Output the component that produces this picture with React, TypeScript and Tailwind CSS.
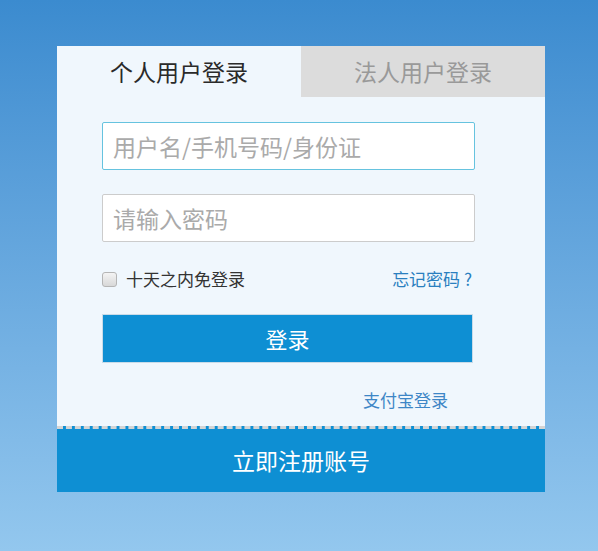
import { useState } from "react";

const FONT = { fontFamily: '"Microsoft YaHei", "Noto Sans CJK SC", "Noto Sans", sans-serif' };

export default function App() {
  const [tab, setTab] = useState<"person" | "corp">("person");
  const [remember, setRemember] = useState(false);

  return (
    <div
      className="h-[551px] w-[598px] bg-gradient-to-b from-[#3b8bcf] to-[#93c7ee] pt-[46px] pl-[57px]"
      style={FONT}
    >
      <div className="w-[488px] bg-[#f0f7fd]">
        <div className="flex h-[51px]">
          <button
            className={`flex-1 text-[23px] ${tab === "person" ? "bg-[#f0f7fd] text-[#2a2a2a]" : "bg-[#dcdcdc] text-[#999]"}`}
            onClick={() => setTab("person")}
          >
            个人用户登录
          </button>
          <button
            className={`flex-1 text-[23px] ${tab === "corp" ? "bg-[#f0f7fd] text-[#2a2a2a]" : "bg-[#dcdcdc] text-[#999]"}`}
            onClick={() => setTab("corp")}
          >
            法人用户登录
          </button>
        </div>

        <div className="px-[45px] pt-[25px] pb-[13px]">
          <input
            className="block h-[48px] w-[373px] rounded-[2px] border border-[#66c3df] bg-white px-[10px] text-[23px] text-[#333] outline-none placeholder:text-[#aaa]"
            placeholder="用户名/手机号码/身份证"
          />
          <input
            type="password"
            className="mt-[24px] block h-[48px] w-[373px] rounded-[2px] border border-[#cccccc] bg-white px-[10px] text-[23px] text-[#333] outline-none placeholder:text-[#aaa]"
            placeholder="请输入密码"
          />

          <div className="mt-[26px] flex h-[22px] w-[370px] items-center justify-between">
            <label className="flex items-center gap-[9px] text-[17px] text-[#333]">
              <input
                type="checkbox"
                checked={remember}
                onChange={(e) => setRemember(e.target.checked)}
                className="h-[15px] w-[15px] appearance-none rounded-[3px] border border-[#b5b5b5] bg-gradient-to-b from-[#f4f4f4] to-[#d8d8d8] checked:bg-[#0e8fd3]"
              />
              十天之内免登录
            </label>
            <a href="#" className="text-[17px] text-[#2a7fbf]">
              忘记密码 ?
            </a>
          </div>

          <button className="mt-[24px] block h-[49px] w-[371px] border border-[#c9dbe8] bg-[#0e8fd3] text-[22px] text-white">
            登录
          </button>

          <div className="mt-[24px] flex w-[346px] justify-end">
            <a href="#" className="text-[17px] text-[#3d86c6]">
              支付宝登录
            </a>
          </div>
        </div>

        <div className="flex h-[66px] items-center justify-center border-t-[3px] border-dashed border-[#d4d4d4] bg-[#0e8fd3] text-[23px] text-white">
          立即注册账号
        </div>
      </div>
    </div>
  );
}
